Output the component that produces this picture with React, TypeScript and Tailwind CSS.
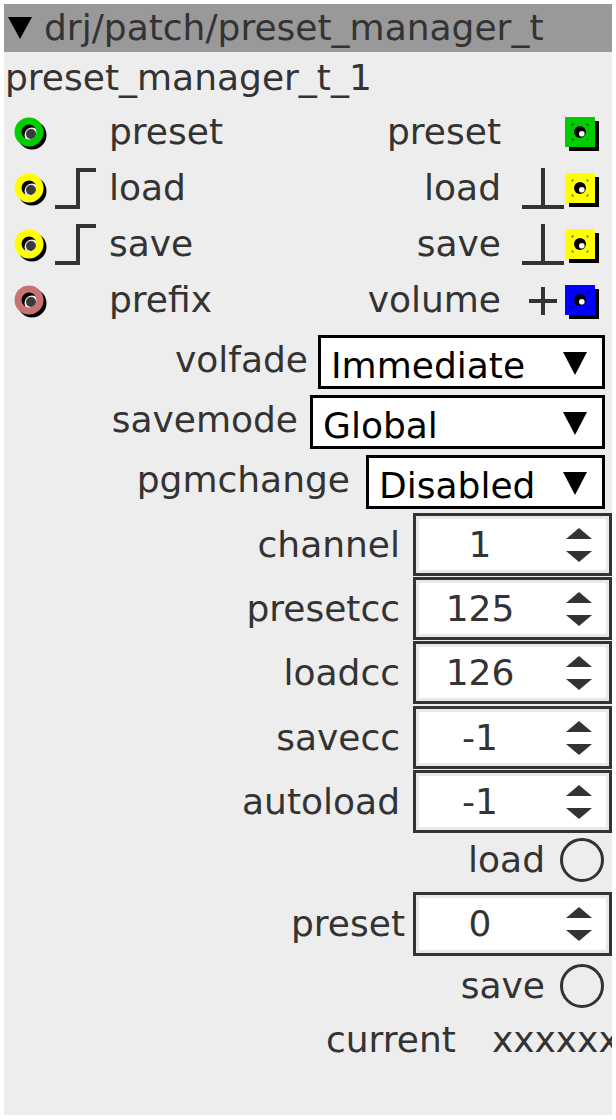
import React from "react";

const ink = "#333";

function InletRing({ color }: { color: string }) {
  return (
    <svg width="36" height="40" viewBox="0 0 36 40" className="shrink-0">
      <circle cx="18" cy="23" r="11" fill="none" stroke="#000" strokeWidth="7" />
      <circle cx="17" cy="22" r="5" fill="#3a3a3a" />
      <circle cx="15" cy="20" r="11" fill="none" stroke={color} strokeWidth="7" />
    </svg>
  );
}

function OutletSquare({ color }: { color: string }) {
  return (
    <svg width="36" height="40" viewBox="0 0 36 40" className="shrink-0">
      <rect x="4" y="9" width="30" height="30" fill="#000" />
      <rect x="0" y="5" width="30" height="30" fill={color} />
      <path
        d="M7 14V12H9 M21 12H23V14 M23 26V28H21 M9 28H7V26"
        stroke="#000"
        strokeWidth="1"
        fill="none"
        opacity="0.55"
      />
      <circle cx="15" cy="20" r="6" fill="#000" />
      <circle cx="16.8" cy="21.8" r="2.8" fill="#fff" />
    </svg>
  );
}

function StepIn() {
  return (
    <svg width="44" height="56" viewBox="0 0 44 56" className="shrink-0">
      <path d="M0 47 H23 V10 H41" stroke={ink} strokeWidth="4" fill="none" />
    </svg>
  );
}

function StepOut() {
  return (
    <svg width="44" height="56" viewBox="0 0 44 56" className="shrink-0">
      <path d="M1 47 H43 M22 47 V8" stroke={ink} strokeWidth="4" fill="none" />
    </svg>
  );
}

function Plus() {
  return (
    <svg width="44" height="56" viewBox="0 0 44 56" className="shrink-0">
      <path d="M8 29 H36 M22 15 V43" stroke={ink} strokeWidth="4" fill="none" />
    </svg>
  );
}

function IoRow({
  inColor,
  inLabel,
  inStep,
  outLabel,
  outColor,
  outIcon,
}: {
  inColor: string;
  inLabel: string;
  inStep: boolean;
  outLabel: string;
  outColor: string;
  outIcon: "none" | "step" | "plus";
}) {
  return (
    <div className="h-[56px] flex items-center">
      <div className="pl-[10px] flex items-center">
        <InletRing color={inColor} />
        <div className="ml-[5px] w-[44px] flex">{inStep && <StepIn />}</div>
        <span className="ml-[10px]">{inLabel}</span>
      </div>
      <div className="ml-auto pr-[11px] flex items-center">
        <span className="mr-[20px]">{outLabel}</span>
        <div className="w-[44px] flex">
          {outIcon === "step" && <StepOut />}
          {outIcon === "plus" && <Plus />}
        </div>
        <OutletSquare color={outColor} />
      </div>
    </div>
  );
}

function DropDown({ label, value, width, gap, mt }: { label: string; value: string; width: string; gap: string; mt: string }) {
  return (
    <div className={`flex items-center justify-end pr-[7px] ${mt}`}>
      <span className={`${gap} -mt-[4px]`}>{label}</span>
      <div className={`${width} h-[54px] border-[3px] border-black bg-white flex items-end text-black relative`}>
        <span className="pl-[10px] leading-[40px]">{value}</span>
        <svg width="24" height="23" viewBox="0 0 24 23" className="absolute right-[15px] top-[14px]">
          <polygon points="0,0 24,0 12,23" fill="#000" />
        </svg>
      </div>
    </div>
  );
}

function Spinner({ label, value, mt, gap = "mr-[13px]", h = "h-[63px]" }: { label: string; value: string; mt: string; gap?: string; h?: string }) {
  return (
    <div className={`flex items-center justify-end ${mt}`}>
      <span className={gap}>{label}</span>
      <div className={`w-[199px] ${h} border-[3px] border-[#333] bg-white`}>
        <div className="h-full border-[3px] border-[#e8e8e8] flex items-center">
          <span className="w-[122px] text-center">{value}</span>
          <div className="ml-auto mr-[14px] flex flex-col gap-[12px]">
            <svg width="26" height="11" viewBox="0 0 26 11">
              <polygon points="13,0 26,11 0,11" fill={ink} />
            </svg>
            <svg width="26" height="11" viewBox="0 0 26 11">
              <polygon points="0,0 26,0 13,11" fill={ink} />
            </svg>
          </div>
        </div>
      </div>
    </div>
  );
}

function Bang({ label, mt }: { label: string; mt: string }) {
  return (
    <div className={`h-[46px] flex items-center justify-end pr-[8px] ${mt}`}>
      <span className="mr-[15px]">{label}</span>
      <div className="w-[44px] h-[44px] rounded-full border-[3px] border-[#333]" />
    </div>
  );
}

export default function App() {
  return (
    <div className="w-[616px] h-[1120px] bg-white pt-[4px] pl-[4px]">
      <div className="w-[608px] h-[1111px] bg-[#ededed] overflow-hidden flex flex-col font-['DejaVu_Sans',sans-serif] text-[36px] text-[#333] leading-[42px]">
        <div className="h-[48px] shrink-0 bg-[#999] flex items-center">
          <svg width="24" height="22" viewBox="0 0 24 22" className="ml-[4px] shrink-0">
            <polygon points="0,0 24,0 12,22" fill="#000" />
          </svg>
          <span className="ml-[12px] whitespace-nowrap">drj/patch/preset_manager_t</span>
        </div>
        <div className="h-[52px] shrink-0 flex items-center pl-[1px]">preset_manager_t_1</div>

        <IoRow inColor="#00cc00" inLabel="preset" inStep={false} outLabel="preset" outColor="#00cc00" outIcon="none" />
        <IoRow inColor="#ffff00" inLabel="load" inStep outLabel="load" outColor="#ffff00" outIcon="step" />
        <IoRow inColor="#ffff00" inLabel="save" inStep outLabel="save" outColor="#ffff00" outIcon="step" />
        <IoRow inColor="#c87373" inLabel="prefix" inStep={false} outLabel="volume" outColor="#0000ff" outIcon="plus" />

        <DropDown label="volfade" value="Immediate" width="w-[287px]" gap="mr-[10px]" mt="mt-[7px]" />
        <DropDown label="savemode" value="Global" width="w-[295px]" gap="mr-[12px]" mt="mt-[6px]" />
        <DropDown label="pgmchange" value="Disabled" width="w-[239px]" gap="mr-[16px]" mt="mt-[6px]" />

        <Spinner label="channel" value="1" mt="mt-[4px]" />
        <Spinner label="presetcc" value="125" mt="mt-[1px]" />
        <Spinner label="loadcc" value="126" mt="mt-[1px]" />
        <Spinner label="savecc" value="-1" mt="mt-[2px]" />
        <Spinner label="autoload" value="-1" mt="mt-[1px]" />

        <Bang label="load" mt="mt-[4px]" />
        <Spinner label="preset" value="0" mt="mt-[9px]" gap="mr-[8px]" h="h-[64px]" />
        <Bang label="save" mt="mt-[7px]" />

        <div className="h-[56px] shrink-0 flex items-center pl-[322px] mt-[3px] whitespace-nowrap">
          <span>current</span>
          <span className="ml-[36px]">xxxxxxxx</span>
        </div>
      </div>
    </div>
  );
}
